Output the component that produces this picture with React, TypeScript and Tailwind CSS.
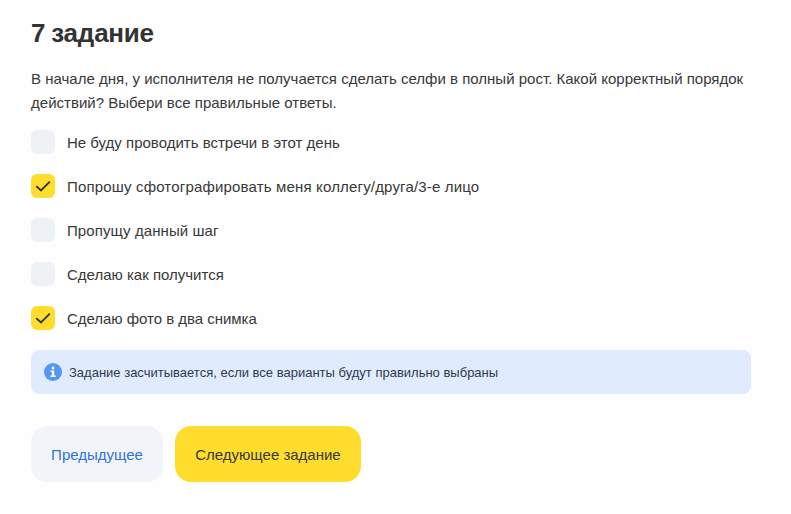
import React from "react";

type Option = { label: string; tracking: string; checked: boolean };

const options: Option[] = [
  { label: "Не буду проводить встречи в этот день", tracking: "tracking-normal", checked: false },
  { label: "Попрошу сфотографировать меня коллегу/друга/3-е лицо", tracking: "tracking-[0.17px]", checked: true },
  { label: "Пропущу данный шаг", tracking: "tracking-[0.08px]", checked: false },
  { label: "Сделаю как получится", tracking: "tracking-normal", checked: false },
  { label: "Сделаю фото в два снимка", tracking: "tracking-[-0.03px]", checked: true },
];

function Checkbox({ option }: { option: Option }) {
  return (
    <label className="flex h-6 items-center gap-3">
      <span className={`flex size-6 shrink-0 items-center justify-center rounded-md ${option.checked ? "bg-[#ffdd2d]" : "bg-[#eef1f6]"}`}>
        {option.checked && (
          <svg className="size-6" viewBox="0 0 24 24" fill="none" stroke="#333333" strokeWidth="1.9">
            <path d="M5.2 12.1 10 16.5 18.8 7.7" />
          </svg>
        )}
      </span>
      <span className={`pt-0.5 ${option.tracking}`}>{option.label}</span>
    </label>
  );
}

export default function App() {
  return (
    <main className="h-[514px] bg-[#fefefe] px-[31px] pt-[17px] font-['Liberation_Sans',sans-serif] text-[15px] leading-6 text-[#383838]">
      <h1 className="text-[26px] font-bold leading-8 tracking-[-0.22px] text-[#333333] [word-spacing:-1px]">7 задание</h1>
      <div className="mt-[18px] whitespace-nowrap">
        <p className="tracking-[0.01px]">В начале дня, у исполнителя не получается сделать селфи в полный рост. Какой корректный порядок</p>
        <p className="tracking-[0.02px]">действий? Выбери все правильные ответы.</p>
      </div>
      <div className="mt-[15px] flex flex-col gap-5">
        {options.map((option) => <Checkbox key={option.label} option={option} />)}
      </div>
      <div className="mt-5 flex h-11 w-[720px] items-center rounded-lg bg-[#e0ebfe] pl-3 text-[13px] text-[#303a50]">
        <svg className="mr-1.5 size-5" viewBox="0 0 20 20">
          <circle cx="10" cy="10" r="9" fill="#5595f6" />
          <circle cx="10" cy="6" r="1.4" fill="white" />
          <path d="M7.6 8.4h3.6v5.1h1.5V15H7.4v-1.5h1.5V9.9H7.6z" fill="white" />
        </svg>
        <span className="pt-0.5">Задание засчитывается, если все варианты будут правильно выбраны</span>
      </div>
      <div className="mt-8 flex gap-3">
        <button className="h-14 w-[132px] rounded-2xl bg-[#f3f4fa] pt-0.5 text-[#2d75dc]">Предыдущее</button>
        <button className="h-14 w-[186px] rounded-2xl bg-[#ffdd2d] pt-0.5">Следующее задание</button>
      </div>
    </main>
  );
}
